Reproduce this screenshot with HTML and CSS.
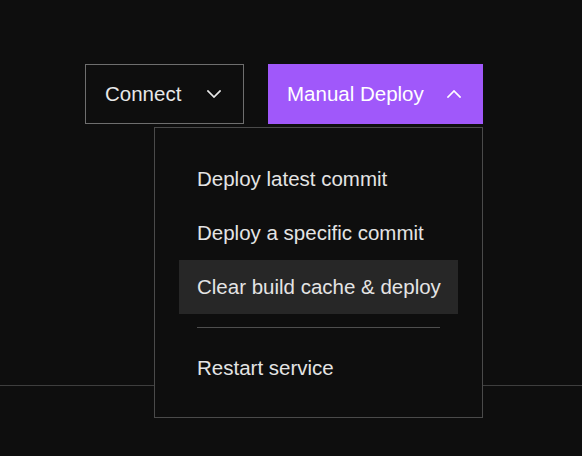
FILE: index.html
```html
<!DOCTYPE html>
<html lang="en">
<head>
<meta charset="utf-8">
<title>Deploy menu</title>
<link rel="stylesheet" href="styles.css">
</head>
<body>
<div class="page">
  <div class="toolbar">
    <button class="btn btn-outline">
      <span>Connect</span>
      <svg class="chev" width="14" height="8" viewBox="0 0 14 8"><polyline points="1,1 7,7 13,1"/></svg>
    </button>
    <div class="deploy-wrap">
      <button class="btn btn-primary">
        <span>Manual Deploy</span>
        <svg class="chev" width="14" height="8" viewBox="0 0 14 8"><polyline points="1,7 7,1 13,7"/></svg>
      </button>
      <div class="menu">
        <div class="menu-item">Deploy latest commit</div>
        <div class="menu-item">Deploy a specific commit</div>
        <div class="menu-item is-active">Clear build cache &amp; deploy</div>
        <div class="menu-sep"></div>
        <div class="menu-item">Restart service</div>
      </div>
    </div>
  </div>
  <div class="divider"></div>
</div>
</body>
</html>
```
FILE: styles.css
```css
html, body {
  margin: 0;
  padding: 0;
  background: #0e0e0e;
}
body {
  font-family: "Liberation Sans", Arial, sans-serif;
  color: #e6e6e6;
  width: 582px;
  height: 456px;
  overflow: hidden;
}
.toolbar {
  display: flex;
  gap: 24px;
  padding: 64px 0 0 85px;
}
.btn {
  box-sizing: border-box;
  height: 60px;
  display: flex;
  align-items: center;
  font-family: inherit;
  font-size: 20.5px;
  letter-spacing: 0;
  cursor: pointer;
  margin: 0;
}
.btn-outline {
  width: 159px;
  padding: 0 22px 0 19px;
  justify-content: space-between;
  background: transparent;
  color: #e8e8e8;
  border: 1px solid #6e6e6e;
}
.btn-primary {
  width: 215px;
  padding: 0 22px 0 19px;
  justify-content: space-between;
  background: #a058fa;
  color: #ffffff;
  border: none;
}
.chev {
  fill: none;
  stroke: currentColor;
  stroke-width: 1.7;
  stroke-linecap: square;
  stroke-linejoin: miter;
  flex: none;
}
.deploy-wrap {
  position: relative;
}
.menu {
  position: absolute;
  top: 63px;
  right: 0;
  width: 329px;
  box-sizing: border-box;
  padding: 24px 24px 22px;
  background: #0e0e0e;
  border: 1px solid #4a4a4a;
  z-index: 2;
}
.menu-item {
  height: 54px;
  line-height: 54px;
  padding: 0 18px;
  font-size: 20.5px;
  letter-spacing: 0;
  color: #e4e4e4;
  white-space: nowrap;
}
.menu-item.is-active {
  background: #272727;
}
.menu-sep {
  height: 1px;
  background: #4e4e4e;
  margin: 13px 18px;
}
.divider {
  height: 1px;
  background: #3e3e3e;
  margin-top: 261px;
}
```
